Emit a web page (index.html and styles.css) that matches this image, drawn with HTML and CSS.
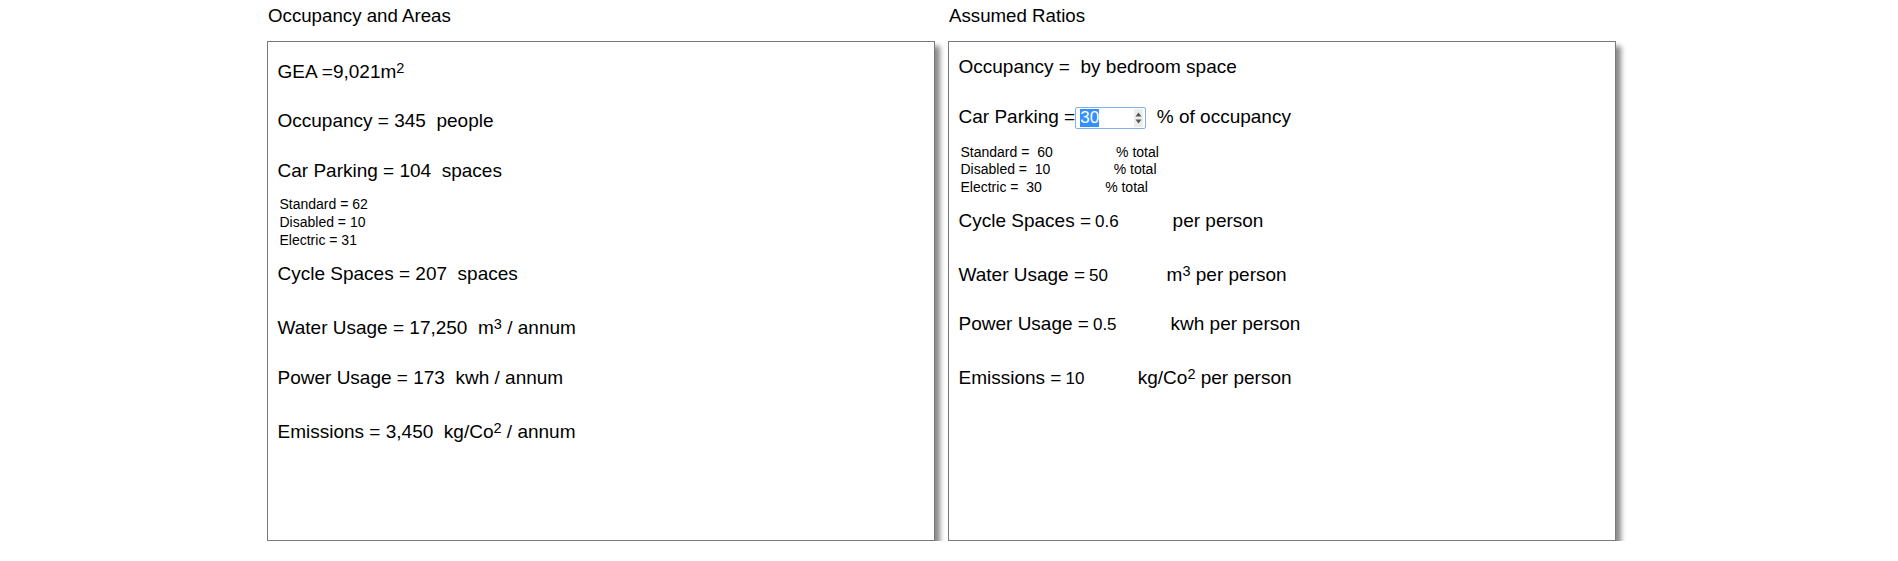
FILE: index.html
```html
<!DOCTYPE html>
<html lang="en">
<head>
<meta charset="utf-8">
<title>Occupancy and Areas</title>
<link rel="stylesheet" href="styles.css">
</head>
<body>
<main class="page">
  <section class="panel">
    <h2 class="panel-title">Occupancy and Areas</h2>
    <div class="card">
      <p class="row row--sup">GEA =9,021m<sup class="sup">2</sup></p>
      <p class="row">Occupancy = 345&nbsp; people</p>
      <p class="row">Car Parking = 104&nbsp; spaces</p>
      <div class="sub">
        <div class="sub-line">Standard = 62</div>
        <div class="sub-line">Disabled = 10</div>
        <div class="sub-line">Electric = 31</div>
      </div>
      <p class="row">Cycle Spaces = 207&nbsp; spaces</p>
      <p class="row row--sup">Water Usage = 17,250&nbsp; m<sup class="sup">3</sup> / annum</p>
      <p class="row">Power Usage = 173&nbsp; kwh / annum</p>
      <p class="row row--sup">Emissions = 3,450&nbsp; kg/Co<sup class="sup">2</sup> / annum</p>
    </div>
  </section>

  <section class="panel">
    <h2 class="panel-title">Assumed Ratios</h2>
    <div class="card">
      <p class="row">Occupancy =&nbsp; by bedroom space</p>
      <p class="row">Car Parking =<span class="spin-input"><span class="spin-value">30</span><span class="spin-arrows"><svg width="9" height="18" viewBox="0 0 9 18" aria-hidden="true"><path d="M1.5 7.5 L4.5 3.5 L7.5 7.5 Z" fill="#555"/><path d="M1.5 10.5 L4.5 14.5 L7.5 10.5 Z" fill="#555"/></svg></span></span>&nbsp; % of occupancy</p>
      <div class="sub sub--fields">
        <div class="sub-line">Standard =&nbsp; <span class="sub-field">60</span> % total</div>
        <div class="sub-line">Disabled =&nbsp; <span class="sub-field">10</span> % total</div>
        <div class="sub-line">Electric =&nbsp; <span class="sub-field">30</span> % total</div>
      </div>
      <p class="row">Cycle Spaces =<span class="field">0.6</span>&nbsp; per person</p>
      <p class="row row--sup">Water Usage =<span class="field">50</span>&nbsp; m<sup class="sup">3</sup> per person</p>
      <p class="row">Power Usage =<span class="field">0.5</span>&nbsp; kwh per person</p>
      <p class="row row--sup">Emissions =<span class="field">10</span> kg/Co<sup class="sup">2</sup> per person</p>
    </div>
  </section>
</main>
</body>
</html>
```

FILE: styles.css
```css
html, body {
  margin: 0;
  padding: 0;
  background: #ffffff;
}

body {
  font-family: "Liberation Sans", Arial, sans-serif;
  color: #000000;
}

.page {
  display: flex;
  gap: 13px;
  padding-left: 267px;
}

.panel {
  width: 668px;
  display: flex;
  flex-direction: column;
}

.panel-title {
  margin: 5px 0 14px 1px;
  font-size: 18.7px;
  font-weight: normal;
  line-height: 22px;
}

.card {
  box-sizing: border-box;
  height: 500px;
  border: 1px solid #7a7a7a;
  background: #ffffff;
  box-shadow: 5px 5px 5px #8a8a8a;
  padding: 14px 9.5px;
}

.row {
  margin: 27.5px 0 0;
  font-size: 19px;
  line-height: 22px;
  white-space: nowrap;
}

.row:first-child {
  margin-top: 0;
}

.row--sup {
  padding-top: 4.5px;
}

.sup {
  font-size: 14.5px;
  line-height: 0;
  vertical-align: 5px;
}

.sub {
  margin: 14.5px 0 0 2px;
  font-size: 14px;
  line-height: 17.75px;
  white-space: nowrap;
}

.sub--fields {
  margin-top: 16px;
}

.sub + .row {
  margin-top: 14px;
}

.sub--fields + .row {
  margin-top: 13px;
}

.sub-field {
  display: inline-block;
  width: 75px;
  line-height: 1;
}

.field {
  display: inline-block;
  box-sizing: border-box;
  width: 71px;
  padding-left: 4px;
  font-size: 17px;
  line-height: 1;
}

.spin-input {
  display: inline-block;
  box-sizing: border-box;
  width: 71px;
  height: 22px;
  margin-bottom: -1px;
  border: 1px solid #86aee8;
  border-radius: 2px;
  padding: 0 2px 0 4px;
  font-size: 17px;
  line-height: 20px;
  vertical-align: baseline;
  position: relative;
}

.spin-value {
  background: #3390ff;
  color: #ffffff;
  display: inline-block;
  line-height: 18px;
}

.spin-arrows {
  position: absolute;
  top: 1px;
  right: 2px;
  width: 9px;
  height: 18px;
  background: #ededed;
  display: block;
  line-height: 0;
}
```
